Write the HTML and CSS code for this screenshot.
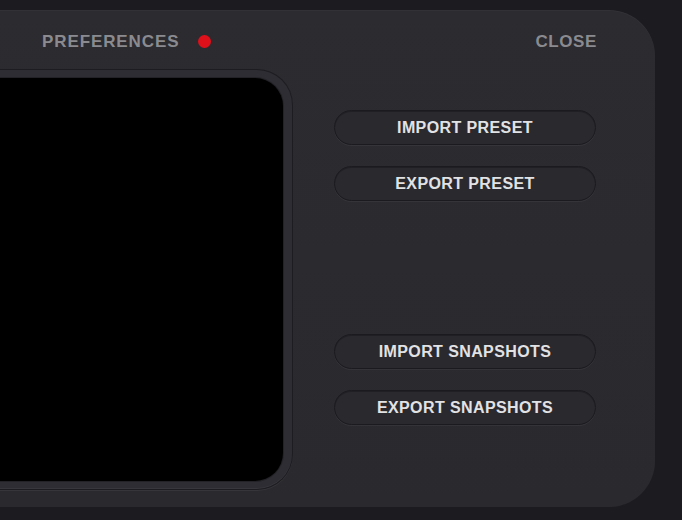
FILE: index.html
```html
<!DOCTYPE html>
<html>
<head>
<meta charset="utf-8">
<link rel="stylesheet" href="styles.css">
</head>
<body>
<div class="panel">
  <div class="header">
    <div class="title">
      <span class="label">PREFERENCES</span>
      <span class="dot"></span>
    </div>
    <span class="label close">CLOSE</span>
  </div>
  <div class="main">
    <div class="screen"><div class="screen-inner"></div></div>
    <div class="actions">
      <div class="group">
        <button class="btn">IMPORT PRESET</button>
        <button class="btn">EXPORT PRESET</button>
      </div>
      <div class="group">
        <button class="btn">IMPORT SNAPSHOTS</button>
        <button class="btn">EXPORT SNAPSHOTS</button>
      </div>
    </div>
  </div>
</div>
</body>
</html>
```
FILE: styles.css
```css
html, body {
  margin: 0;
  padding: 0;
  width: 682px;
  height: 520px;
  overflow: hidden;
  background: #1c1c20;
  font-family: "Liberation Sans", Arial, sans-serif;
}
body {
  padding-top: 10px;
  box-sizing: border-box;
}
.panel {
  margin-left: -40px;
  width: 695px;
  height: 497px;
  box-sizing: border-box;
  background: linear-gradient(180deg, #2b2b30 0%, #29292e 100%);
  border-radius: 0 46px 46px 0;
  padding: 0 59px 17px 0;
  display: flex;
  flex-direction: column;
  box-shadow: inset 0 1px 0 rgba(255,255,255,0.03);
}
.header {
  height: 59px;
  box-sizing: border-box;
  padding: 4px 0 0 82px;
  display: flex;
  align-items: center;
  justify-content: space-between;
}
.title {
  display: flex;
  align-items: center;
  gap: 19px;
}
.label {
  font-weight: bold;
  font-size: 17px;
  letter-spacing: 0.9px;
  color: #8a8a8f;
}
.close {
  letter-spacing: 0.6px;
  margin-right: -1px;
}
.dot {
  width: 13px;
  height: 13px;
  border-radius: 50%;
  background: #e0101a;
}
.main {
  flex: 1;
  display: flex;
  gap: 41px;
}
.screen {
  width: 333px;
  box-sizing: border-box;
  background: #2d2d33;
  border-radius: 0 36px 36px 0;
  border: 1px solid #1d1d21;
  border-left: none;
  padding: 8px 9px 8px 0;
  display: flex;
  box-shadow: 0 1px 0 rgba(255,255,255,0.06), inset 0 -1px 0 rgba(255,255,255,0.05);
}
.screen-inner {
  flex: 1;
  background: #000;
  border-radius: 0 28px 28px 0;
  box-shadow: 0 0 0 1px #222227;
}
.actions {
  width: 262px;
  display: flex;
  flex-direction: column;
  justify-content: space-between;
  padding: 41px 0 65px;
}
.group {
  display: flex;
  flex-direction: column;
  gap: 21px;
}
.btn {
  height: 35px;
  border-radius: 18px;
  border: 1px solid #1b1b1f;
  background: #29292e;
  color: #e2e2e4;
  font-family: "Liberation Sans", Arial, sans-serif;
  font-weight: bold;
  font-size: 16px;
  letter-spacing: 0.4px;
  padding: 0;
  box-shadow: 0 1px 0 rgba(255,255,255,0.05), inset 0 1px 0 rgba(0,0,0,0.2);
}
```
